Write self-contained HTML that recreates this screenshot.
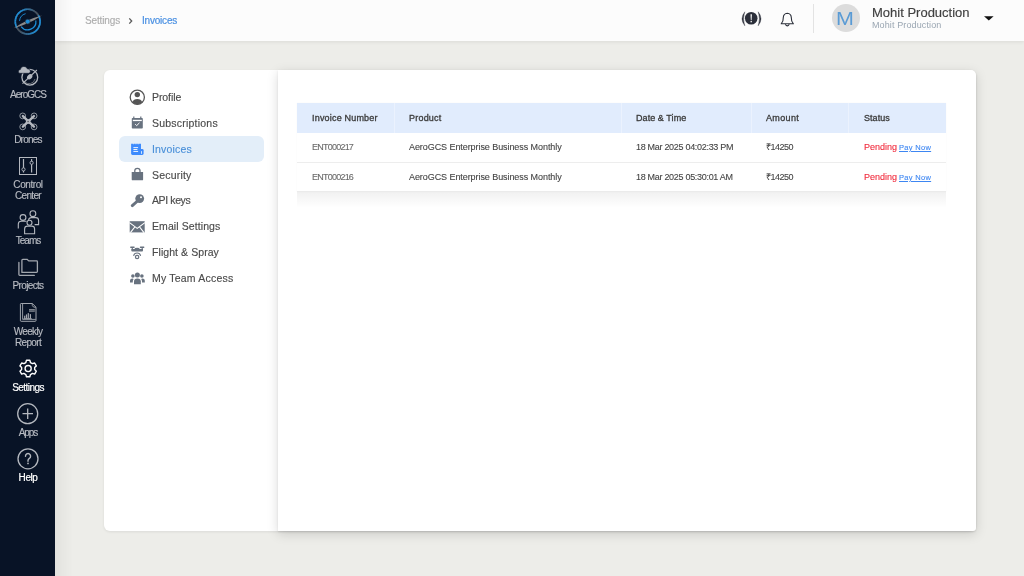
<!DOCTYPE html>
<html><head><meta charset="utf-8">
<style>
*{box-sizing:border-box;margin:0;padding:0}
html,body{width:1024px;height:576px;overflow:hidden;background:#edede9;font-family:"Liberation Sans",sans-serif}
.a{position:absolute}
.t,.sl,.mi,.th,.td{will-change:transform}
.t{position:absolute;line-height:1;white-space:nowrap}
#side{position:absolute;left:0;top:0;width:55px;height:576px;background:#081326}
.sl{position:absolute;left:0;width:56px;text-align:center;font-size:10px;line-height:1;color:#b9bcc3;-webkit-text-stroke:0.15px currentColor;white-space:nowrap}
#hdr{position:absolute;left:55px;top:0;width:969px;height:40.6px;background:#fcfcfc;box-shadow:0 1px 4px rgba(0,0,0,0.08)}
#card{position:absolute;left:104px;top:70px;width:872px;height:461px;background:#fff;border-radius:6px;box-shadow:0 1px 3px rgba(0,0,0,0.08)}
#rp{position:absolute;left:278px;top:70px;width:698px;height:461px;background:#fff;border-radius:0 5px 3px 0;box-shadow:0 1px 2px rgba(0,0,0,0.10),0 3px 12px rgba(0,0,0,0.15)}
.mi{position:absolute;left:152px;font-size:10.5px;line-height:1;color:#4a4a4a;-webkit-text-stroke:0.15px currentColor;white-space:nowrap}
.th{position:absolute;font-size:9px;line-height:1;color:#3a3a3a;font-weight:400;-webkit-text-stroke:0.3px #3a3a3a;white-space:nowrap}
.td{position:absolute;font-size:9px;line-height:1;color:#444;-webkit-text-stroke:0.1px currentColor;white-space:nowrap}
</style></head><body>

<div id="side">
  <!-- logo -->
  <svg class="a" style="left:0;top:0" width="55" height="44" viewBox="0 0 55 44">
    <circle cx="27.7" cy="21.6" r="12.4" fill="none" stroke="#34516c" stroke-width="1.6"/><g fill="none" stroke-width="1.6"><path d="M16.96 27.80 A12.4 12.4 0 0 1 16.01 25.74" stroke="#1d8fd9"/><path d="M16.05 25.84 A12.4 12.4 0 0 1 15.47 23.65" stroke="#1d8fd9"/><path d="M15.49 23.75 A12.4 12.4 0 0 1 15.30 21.49" stroke="#1d8fd9"/><path d="M15.30 21.60 A12.4 12.4 0 0 1 15.51 19.34" stroke="#1d8fd9"/><path d="M15.49 19.45 A12.4 12.4 0 0 1 16.09 17.26" stroke="#1d8fd9"/><path d="M16.05 17.36 A12.4 12.4 0 0 1 17.02 15.31" stroke="#1d8fd9"/><path d="M16.96 15.40 A12.4 12.4 0 0 1 18.27 13.55" stroke="#1d8fd9"/><path d="M18.20 13.63 A12.4 12.4 0 0 1 19.81 12.03" stroke="#1d8fd9"/><path d="M19.73 12.10 A12.4 12.4 0 0 1 21.59 10.81" stroke="#1d8fd9"/><path d="M21.50 10.86 A12.4 12.4 0 0 1 23.56 9.91" stroke="#208acf"/><path d="M23.46 9.95 A12.4 12.4 0 0 1 25.65 9.37" stroke="#2681bd"/><path d="M25.55 9.39 A12.4 12.4 0 0 1 27.81 9.20" stroke="#2d78ab"/><path d="M27.70 9.20 A12.4 12.4 0 0 1 29.96 9.41" stroke="#346f98"/><path d="M29.85 9.39 A12.4 12.4 0 0 1 32.04 9.99" stroke="#3a6686"/><path d="M31.94 9.95 A12.4 12.4 0 0 1 33.99 10.92" stroke="#415d73"/><path d="M33.90 10.86 A12.4 12.4 0 0 1 35.75 12.17" stroke="#485461"/><path d="M35.67 12.10 A12.4 12.4 0 0 1 37.27 13.71" stroke="#4a525c"/><path d="M37.20 13.63 A12.4 12.4 0 0 1 38.49 15.49" stroke="#4a525c"/><path d="M38.44 15.40 A12.4 12.4 0 0 1 39.39 17.46" stroke="#1d8fd9"/><path d="M39.35 17.36 A12.4 12.4 0 0 1 39.93 19.55" stroke="#1d8fd9"/><path d="M39.91 19.45 A12.4 12.4 0 0 1 40.10 21.71" stroke="#1d8fd9"/><path d="M40.10 21.60 A12.4 12.4 0 0 1 39.89 23.86" stroke="#1d8fd9"/><path d="M39.91 23.75 A12.4 12.4 0 0 1 39.31 25.94" stroke="#1d8fd9"/><path d="M39.35 25.84 A12.4 12.4 0 0 1 38.38 27.89" stroke="#1d8fd9"/><path d="M38.44 27.80 A12.4 12.4 0 0 1 37.13 29.65" stroke="#1d8fd9"/><path d="M37.20 29.57 A12.4 12.4 0 0 1 35.59 31.17" stroke="#1d8fd9"/><path d="M35.67 31.10 A12.4 12.4 0 0 1 33.81 32.39" stroke="#1d8fd9"/><path d="M33.90 32.34 A12.4 12.4 0 0 1 31.84 33.29" stroke="#208acf"/><path d="M31.94 33.25 A12.4 12.4 0 0 1 29.75 33.83" stroke="#2681bd"/><path d="M29.85 33.81 A12.4 12.4 0 0 1 27.59 34.00" stroke="#2d78ab"/><path d="M27.70 34.00 A12.4 12.4 0 0 1 25.44 33.79" stroke="#346f98"/><path d="M25.55 33.81 A12.4 12.4 0 0 1 23.36 33.21" stroke="#3a6686"/><path d="M23.46 33.25 A12.4 12.4 0 0 1 21.41 32.28" stroke="#415d73"/><path d="M21.50 32.34 A12.4 12.4 0 0 1 19.65 31.03" stroke="#485461"/><path d="M19.73 31.10 A12.4 12.4 0 0 1 18.13 29.49" stroke="#4a525c"/><path d="M18.20 29.57 A12.4 12.4 0 0 1 16.91 27.71" stroke="#4a525c"/></g>
    <path d="M19.53 20.89 A8.2 8.2 0 0 1 25.58 13.68" fill="none" stroke="#1d8fd9" stroke-width="0.9"/>
    <path d="M35.82 20.46 A8.2 8.2 0 0 1 21.15 26.53" fill="none" stroke="#1d8fd9" stroke-width="1.2"/>
    <path d="M14 27.9 Q26.8 19.3 41.8 15.4 Q29 24.1 14 27.9 Z" fill="#8a8a8a"/>
    <circle cx="27.7" cy="21.6" r="2.4" fill="#1d8fd9" stroke="#2a3340" stroke-width="0.6"/>
  </svg>
  <!-- AeroGCS icon -->
  <svg class="a" style="left:0;top:60px" width="55" height="30" viewBox="0 60 55 30">
    <circle cx="29.8" cy="77.2" r="7.9" fill="none" stroke="#b4b8bf" stroke-width="1.3"/>
    <path d="M24.5 81.5 A6 6 0 0 0 35 79" fill="none" stroke="#6f747c" stroke-width="0.9"/>
    <path d="M22.5 83.6 L36.9 70" stroke="#b4b8bf" stroke-width="1.1"/>
    <ellipse cx="29.7" cy="76.8" rx="3" ry="2.2" transform="rotate(-43 29.7 76.8)" fill="#b4b8bf"/>
    <path d="M19.8 73.3 Q18.4 73.2 18.4 71.4 Q18.4 69.5 20.4 69.4 Q20.7 66.4 23.9 66.4 Q26.6 66.4 27.3 68.8 Q30.2 68.6 30.4 71.2 Q30.4 73.3 28.6 73.3 Z" fill="#b4b8bf" stroke="#081326" stroke-width="0.6"/>
  </svg>
  <div class="sl" style="top:89.8px;letter-spacing:-1px">AeroGCS</div>
  <!-- Drones -->
  <svg class="a" style="left:0;top:108px" width="55" height="26" viewBox="0 108 55 26">
    <g fill="none" stroke="#9ca1a9" stroke-width="0.9">
      <circle cx="22.7" cy="115.9" r="2.9"/><circle cx="34.1" cy="115.9" r="2.9"/>
      <circle cx="22.7" cy="126.9" r="2.9"/><circle cx="34.1" cy="126.9" r="2.9"/>
    </g>
    <path d="M22.9 116.1 L33.9 126.7 M33.9 116.1 L22.9 126.7" stroke="#b4b8bf" stroke-width="2.4" stroke-linecap="round"/>
    <rect x="25.9" y="119.3" width="4.4" height="4.4" rx="1.2" fill="#b4b8bf"/>
    <circle cx="28.1" cy="121.5" r="0.8" fill="#50555e"/>
  </svg>
  <div class="sl" style="top:135px;letter-spacing:-0.75px">Drones</div>
  <!-- Control Center -->
  <svg class="a" style="left:0;top:152px" width="55" height="26" viewBox="0 152 55 26">
    <rect x="19.5" y="157.5" width="17" height="17" fill="none" stroke="#b4b8bf" stroke-width="1"/>
    <path d="M23.5 159 V172.6 M31.6 159 V172.6" stroke="#b4b8bf" stroke-width="1.2"/>
    <circle cx="23.5" cy="169.4" r="1.6" fill="#081326" stroke="#b4b8bf" stroke-width="0.9"/>
    <circle cx="31.6" cy="162.8" r="1.6" fill="#081326" stroke="#b4b8bf" stroke-width="0.9"/>
  </svg>
  <div class="sl" style="top:180.4px;letter-spacing:-0.42px">Control</div>
  <div class="sl" style="top:191px;letter-spacing:-0.65px">Center</div>
  <!-- Teams -->
  <svg class="a" style="left:0;top:208px" width="55" height="30" viewBox="0 208 55 30">
    <g fill="none" stroke="#b4b8bf" stroke-width="1.1">
      <circle cx="23" cy="217.5" r="2.9"/>
      <path d="M18.3 228.6 V224 Q18.3 221.2 21.3 221.2 H26.5"/>
      <circle cx="32.9" cy="213.7" r="2.9"/>
      <path d="M28.6 220 Q29 217.6 31.3 217.6 H35.8 Q38.6 217.6 38.6 220.4 V224.6 H34.6"/>
      <circle cx="29.5" cy="222.7" r="2.5"/>
      <path d="M24.6 233.7 V229 Q24.6 226.1 27.5 226.1 H31.8 Q34.6 226.1 34.6 229 V233.7 Z"/>
    </g>
  </svg>
  <div class="sl" style="top:235.8px;letter-spacing:-0.95px">Teams</div>
  <!-- Projects -->
  <svg class="a" style="left:0;top:254px" width="55" height="26" viewBox="0 254 55 26">
    <g fill="none" stroke="#a2a7ae" stroke-width="1.3" stroke-linejoin="round" stroke-linecap="round">
      <path d="M21.9 272.4 V260.2 Q21.9 259.3 22.8 259.3 H27 L28.7 260.9 H36.6 Q37.4 260.9 37.4 261.7 V271.6 Q37.4 272.4 36.6 272.4 Z"/>
      <path d="M18.9 262.4 V274.6 Q18.9 275.4 19.7 275.4 H34.3"/>
    </g>
  </svg>
  <div class="sl" style="top:281.4px;letter-spacing:-0.65px">Projects</div>
  <!-- Weekly Report -->
  <svg class="a" style="left:0;top:300px" width="55" height="24" viewBox="0 300 55 24">
    <g fill="none" stroke="#a2a7ae" stroke-width="1" stroke-linejoin="round">
      <path d="M21.1 303.5 H32.3 L36 307.2 V320.5 Q36 321.3 35.2 321.3 H21.1 Q20.4 321.3 20.4 320.5 V304.3 Q20.4 303.5 21.1 303.5 Z"/>
      <path d="M22.6 303.8 V319.4 H35.8" stroke-width="0.9"/>
      <path d="M32.3 303.8 Q31.6 307.4 35.8 307.3" stroke-width="0.9"/>
    </g>
    <rect x="29" y="309" width="5.8" height="2.7" fill="#8e939a"/>
    <path d="M29 310.3 H34.8" stroke="#081326" stroke-width="0.5"/>
    <g fill="#a3a7ae">
      <rect x="24.1" y="315.7" width="1.2" height="2.9"/>
      <rect x="25.9" y="314.4" width="1.2" height="4.2"/>
      <rect x="27.7" y="313.1" width="1.2" height="5.5"/>
      <rect x="29.8" y="314.1" width="1.2" height="4.5"/>
      <rect x="23.5" y="318.2" width="8.2" height="0.8"/>
    </g>
  </svg>
  <div class="sl" style="top:326.5px;letter-spacing:-0.68px">Weekly</div>
  <div class="sl" style="top:337.8px;letter-spacing:-0.64px">Report</div>
  <!-- Settings -->
  <svg class="a" style="left:0;top:356px" width="55" height="24" viewBox="0 356 55 24">
    <g transform="translate(28.15 368.3) scale(0.93)">
      <path fill="none" stroke="#ffffff" stroke-width="1.5" d="M-1.8,-8.6 L1.8,-8.6 L2.5,-6.2 L4.6,-5 L7,-5.7 L8.8,-2.6 L7,-0.9 L7,1.4 L8.8,3.1 L7,6.2 L4.6,5.5 L2.5,6.7 L1.8,9.1 L-1.8,9.1 L-2.5,6.7 L-4.6,5.5 L-7,6.2 L-8.8,3.1 L-7,1.4 L-7,-0.9 L-8.8,-2.6 L-7,-5.7 L-4.6,-5 L-2.5,-6.2 Z" stroke-linejoin="round"/>
      <circle cx="0" cy="0.25" r="3.3" fill="none" stroke="#fff" stroke-width="1.45"/>
    </g>
  </svg>
  <div class="sl" style="top:383.2px;color:#fff;-webkit-text-stroke:0.2px #fff;letter-spacing:-0.55px">Settings</div>
  <!-- Apps -->
  <svg class="a" style="left:0;top:400px" width="55" height="28" viewBox="0 400 55 28">
    <circle cx="27.7" cy="413.7" r="10" fill="none" stroke="#b4b8bf" stroke-width="1.3"/>
    <path d="M27.7 408.5 V419 M22.5 413.7 H33" stroke="#b4b8bf" stroke-width="1.3"/>
  </svg>
  <div class="sl" style="top:427.8px;letter-spacing:-1.1px">Apps</div>
  <!-- Help -->
  <svg class="a" style="left:0;top:445px" width="55" height="28" viewBox="0 445 55 28">
    <circle cx="28" cy="458.8" r="10" fill="none" stroke="#b4b8bf" stroke-width="1.3"/>
    <path d="M25.5 456.2 A2.55 2.55 0 1 1 29.4 458.3 Q28 459.2 28 460.6 V461.2" fill="none" stroke="#b4b8bf" stroke-width="1.4" stroke-linecap="round"/><circle cx="28" cy="463.4" r="0.85" fill="#b4b8bf"/>
  </svg>
  <div class="sl" style="top:472.8px;color:#fff;-webkit-text-stroke:0.2px #fff;letter-spacing:-0.45px">Help</div>
</div>

<div id="hdr"></div>
<div class="t" style="left:85px;top:16.4px;font-size:10px;color:#adadad;-webkit-text-stroke:0.15px #adadad;letter-spacing:-0.13px">Settings</div>
<svg class="a" style="left:126px;top:14.5px" width="10" height="12" viewBox="0 0 10 12"><path d="M3.3 3.4 L5.7 6 L3.3 8.6" fill="none" stroke="#5a5a5a" stroke-width="1.3"/></svg>
<div class="t" style="left:141.5px;top:16.4px;font-size:10px;color:#4a90e2;-webkit-text-stroke:0.2px #4a90e2;letter-spacing:-0.2px">Invoices</div>

<!-- header right -->
<svg class="a" style="left:738px;top:8px" width="28" height="22" viewBox="738 8 28 22">
  <circle cx="751.2" cy="18.3" r="6.3" fill="#2b2f3a"/>
  <path d="M744.8 11.8 Q739.2 18.8 744.8 25.8 Q742.3 18.8 744.8 11.8 Z M758.2 11.8 Q763.8 18.8 758.2 25.8 Q760.7 18.8 758.2 11.8 Z" fill="#2b2f3a" stroke="#2b2f3a" stroke-width="0.35" stroke-linejoin="round"/>
  <path d="M750.5 14.2 H751.9 L751.6 20.2 H750.8 Z" fill="#fff"/>
  <rect x="750.55" y="21" width="1.3" height="1.3" fill="#fff"/>
</svg>
<svg class="a" style="left:776px;top:8.5px" width="22" height="22" viewBox="776 8 22 22">
  <path d="M781.2 22.8 Q783.5 20.5 783.3 16.5 Q783.5 12.5 787.3 12.2 Q791.1 12.5 791.3 16.5 Q791.1 20.5 793.4 22.8 Z" fill="none" stroke="#2b2f3a" stroke-width="1.1" stroke-linejoin="round"/>
  <path d="M785.3 23.2 Q787.3 26.5 789.3 23.2" fill="none" stroke="#2b2f3a" stroke-width="1.1"/>
</svg>
<div class="a" style="left:813px;top:4px;width:1px;height:29px;background:#e3e3e3"></div>
<div class="a" style="left:831.7px;top:4px;width:28.2px;height:28.2px;border-radius:50%;background:#dcdcdc"></div>
<div class="t" style="left:834.6px;top:8.9px;font-size:19px;color:#5a9bd5;width:20px;text-align:center;transform:scaleX(1.13)">M</div>
<div class="t" style="left:871.6px;top:6.1px;font-size:13px;color:#404040;-webkit-text-stroke:0.15px #404040">Mohit Production</div>
<div class="t" style="left:871.6px;top:20.7px;font-size:9px;color:#9aa6b2;letter-spacing:0.12px">Mohit Production</div>
<svg class="a" style="left:982px;top:14px" width="14" height="8" viewBox="982 14 14 8"><path d="M984 16.2 H993.6 L988.8 20.5 Z" fill="#111"/></svg>

<div class="a" style="left:55px;top:0;width:18px;height:576px;background:linear-gradient(90deg,rgba(0,0,0,0.045),rgba(0,0,0,0))"></div>
<!-- card -->
<div id="card"></div>
<div id="rp"></div>

<!-- left menu -->
<div class="a" style="left:118.6px;top:136.2px;width:145.4px;height:25.8px;border-radius:6px;background:#e3eef9"></div>
<div class="mi" style="top:91.6px;letter-spacing:-0.08px">Profile</div>
<div class="mi" style="top:118px;letter-spacing:0.22px">Subscriptions</div>
<div class="mi" style="top:144.2px;letter-spacing:0.17px;color:#4a90d9">Invoices</div>
<div class="mi" style="top:169.5px;letter-spacing:0.2px">Security</div>
<div class="mi" style="top:195.4px;letter-spacing:-0.39px">API keys</div>
<div class="mi" style="top:221.2px;letter-spacing:0.09px">Email Settings</div>
<div class="mi" style="top:247.3px;letter-spacing:0.07px">Flight &amp; Spray</div>
<div class="mi" style="top:272.7px;letter-spacing:0.2px">My Team Access</div>

<!-- menu icons -->
<svg class="a" style="left:125px;top:85px" width="25" height="205" viewBox="125 85 25 205">
  <!-- profile -->
  <circle cx="137.3" cy="97.2" r="7.1" fill="none" stroke="#555" stroke-width="1.3"/>
  <circle cx="137.3" cy="94.6" r="2.7" fill="#555"/>
  <path d="M132.4 102.3 Q133.5 99.2 137.3 99.1 Q141.1 99.2 142.2 102.3 Q140.2 104.4 137.3 104.4 Q134.4 104.4 132.4 102.3 Z" fill="#555"/>
  <!-- subscriptions -->
  <rect x="131.8" y="118" width="11" height="10.6" rx="0.8" fill="#68727f"/>
  <rect x="132.8" y="119.8" width="9" height="1.3" fill="#fff"/>
  <path d="M133.8 116.6 V119 M140.8 116.6 V119" stroke="#68727f" stroke-width="1.2"/>
  <path d="M135.2 124.2 L136.7 125.6 L139.5 122.8" fill="none" stroke="#fff" stroke-width="1"/>
  <!-- invoices -->
  <path d="M131.1 143.8 H141 V154.9 H132.4 Q131.1 154.9 131.1 153.6 Z" fill="#3d8bfd"/>
  <path d="M140.5 148.9 H142.3 Q143.6 148.9 143.6 150.3 V153.6 Q143.6 154.9 142.3 154.9 H140.5 Z" fill="#3d8bfd"/>
  <rect x="141.1" y="150.9" width="0.9" height="3" rx="0.45" fill="#e3eef9"/>
  <path d="M133.4 147.6 H138.1 M133.4 149.5 H137.4 M133.4 151.45 H138.1" stroke="#fff" stroke-width="0.9"/>
  <circle cx="133.6" cy="143.7" r="0.55" fill="#e3eef9"/><circle cx="135.9" cy="143.7" r="0.55" fill="#e3eef9"/><circle cx="138.2" cy="143.7" r="0.55" fill="#e3eef9"/>
  <!-- security -->
  <path d="M131.7 172 H143.1 V179.4 Q143.1 180.3 142.2 180.3 H132.6 Q131.7 180.3 131.7 179.4 Z" fill="#68727f"/>
  <path d="M134.8 172.3 V170.6 Q134.8 168.3 137.4 168.3 Q140 168.3 140 170.6 V172.3" fill="none" stroke="#68727f" stroke-width="1.3"/>
  <!-- api key -->
  <circle cx="139.7" cy="198.6" r="4.4" fill="#68727f"/>
  <path d="M137.5 201 L132.3 205.6" stroke="#68727f" stroke-width="3" stroke-linecap="round"/>
  <circle cx="141" cy="197.3" r="1" fill="#fff"/>
  <!-- email -->
  <rect x="129.7" y="221.2" width="15" height="11.2" fill="#68727f"/>
  <path d="M129.5 222.6 L137.2 228.4 L144.9 222.6 M130.4 232.6 L134.8 227 M144 232.6 L139.6 227" fill="none" stroke="#fff" stroke-width="1.15"/>
  <!-- flight -->
  <rect x="130.1" y="246.6" width="4.6" height="1.3" rx="0.6" fill="#68727f"/>
  <rect x="139.8" y="246.6" width="4.6" height="1.3" rx="0.6" fill="#68727f"/>
  <rect x="131.7" y="247" width="1.2" height="2.5" fill="#68727f"/>
  <rect x="141.6" y="247" width="1.2" height="2.5" fill="#68727f"/>
  <path d="M131.3 249.1 H143 V250.6 Q143 251.5 142 251.5 H132.3 Q131.3 251.5 131.3 250.6 Z" fill="#68727f"/>
  <ellipse cx="137.1" cy="248.9" rx="2.6" ry="1.2" fill="#68727f"/>
  <path d="M133.6 255.8 A3.6 3.6 0 0 1 140.6 255.8" fill="none" stroke="#68727f" stroke-width="1.1"/>
  <circle cx="137.1" cy="257" r="1.7" fill="none" stroke="#68727f" stroke-width="1.2"/>
  <!-- team -->
  <circle cx="137.4" cy="275" r="2.5" fill="#68727f"/>
  <circle cx="132.9" cy="276" r="1.8" fill="#68727f"/>
  <circle cx="141.9" cy="276" r="1.8" fill="#68727f"/>
  <path d="M134 284.2 V281.3 Q134 278.4 137.4 278.4 Q140.8 278.4 140.8 281.3 V284.2 Z" fill="#68727f"/>
  <path d="M130 282.5 V280.5 Q130 278.6 132.5 278.6 Q133.5 278.6 133.6 279 Q132.8 280 132.8 281.5 V282.5 Z" fill="#68727f"/>
  <path d="M144.8 282.5 V280.5 Q144.8 278.6 142.3 278.6 Q141.3 278.6 141.2 279 Q142 280 142 281.5 V282.5 Z" fill="#68727f"/>
</svg>

<!-- table -->
<div class="a" style="left:296.7px;top:102.6px;width:649.2px;height:89px;background:#fff;box-shadow:0 0 1px rgba(0,0,0,0.06)"></div>
<div class="a" style="left:296.7px;top:191.6px;width:649.2px;height:16px;background:linear-gradient(rgba(0,0,0,0.055),rgba(0,0,0,0))"></div>
<div class="a" style="left:296.7px;top:102.6px;width:649.2px;height:30px;background:#e1ecfd"></div>
<div class="a" style="left:394px;top:102.6px;width:1px;height:30px;background:rgba(255,255,255,0.35)"></div>
<div class="a" style="left:621.3px;top:102.6px;width:1px;height:30px;background:rgba(255,255,255,0.35)"></div>
<div class="a" style="left:750.8px;top:102.6px;width:1px;height:30px;background:rgba(255,255,255,0.35)"></div>
<div class="a" style="left:848.3px;top:102.6px;width:1px;height:30px;background:rgba(255,255,255,0.35)"></div>
<div class="a" style="left:296.7px;top:162px;width:649.2px;height:1px;background:#ededed"></div>
<div class="a" style="left:296.7px;top:190.8px;width:649.2px;height:1px;background:#ebebeb"></div>

<div class="th" style="left:311.7px;top:114px;letter-spacing:0.19px">Invoice Number</div>
<div class="th" style="left:409px;top:114px;letter-spacing:0.21px">Product</div>
<div class="th" style="left:636.4px;top:114px;letter-spacing:0.07px">Date &amp; Time</div>
<div class="th" style="left:766.2px;top:114px;letter-spacing:0.37px">Amount</div>
<div class="th" style="left:863.5px;top:114px;letter-spacing:0.06px">Status</div>

<div class="td" style="left:311.5px;top:143.2px;color:#6a6a6a;letter-spacing:-0.77px">ENT000217</div>
<div class="td" style="left:409px;top:143.2px;letter-spacing:-0.07px">AeroGCS Enterprise Business Monthly</div>
<div class="td" style="left:636.4px;top:143.2px;letter-spacing:-0.3px">18 Mar 2025 04:02:33 PM</div>
<div class="td" style="left:766.2px;top:143.2px;letter-spacing:-0.5px">₹14250</div>
<div class="td" style="left:863.5px;top:143.2px;color:#f0283a;letter-spacing:-0.02px">Pending</div>
<div class="td" style="left:899px;top:144.3px;font-size:7.5px;color:#3d86f2;text-decoration:underline;letter-spacing:0.3px">Pay Now</div>

<div class="td" style="left:311.5px;top:173px;color:#6a6a6a;letter-spacing:-0.77px">ENT000216</div>
<div class="td" style="left:409px;top:173px;letter-spacing:-0.07px">AeroGCS Enterprise Business Monthly</div>
<div class="td" style="left:636.4px;top:173px;letter-spacing:-0.3px">18 Mar 2025 05:30:01 AM</div>
<div class="td" style="left:766.2px;top:173px;letter-spacing:-0.5px">₹14250</div>
<div class="td" style="left:863.5px;top:173px;color:#f0283a;letter-spacing:-0.02px">Pending</div>
<div class="td" style="left:899px;top:174.1px;font-size:7.5px;color:#3d86f2;text-decoration:underline;letter-spacing:0.3px">Pay Now</div>

</body></html>
